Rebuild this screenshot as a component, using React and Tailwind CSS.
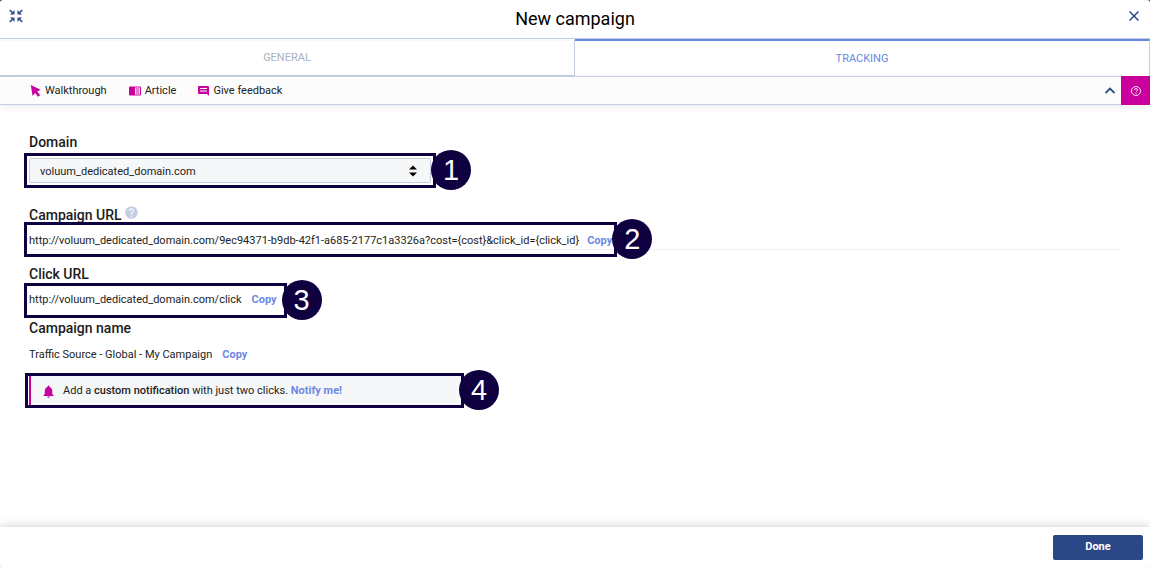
import React from "react";
import { MdHelp, MdNotifications } from "react-icons/md";

function Callout({ number, inset = "-inset-[5px]", className = "", children }) {
  return (
    <div className={`relative ${className}`}>
      {children}
      <div className={`pointer-events-none absolute border-3 border-[#0f0140] ${inset}`}>
        <span className="absolute -top-[6px] -right-[38px] flex size-10 items-center justify-center rounded-full bg-[#0f0140] font-['Liberation_Sans',sans-serif] text-[29px] leading-10 text-white">
          {number}
        </span>
      </div>
    </div>
  );
}

function Heading({ children }) {
  return <h2 className="text-sm leading-5 font-medium text-[#1c1c1c]">{children}</h2>;
}

function Copy() {
  return (
    <button type="button" className="font-bold text-[#6c8ae4]">
      Copy
    </button>
  );
}

function CollapseIcon() {
  return (
    <svg viewBox="0 0 14 14" className="size-[14px]" fill="#2c4786" stroke="#2c4786">
      <path strokeWidth="1.7" d="M.8 1l3 3M13.200 1l-3 3M.8 13l3-3M13.200 13l-3-3" />
      <path stroke="none" d="M5.500 1v4.500H1l1.500-1.300L4.200 2.500zM8.500 1v4.500H13l-1.500-1.300L9.800 2.500zM5.500 13V8.500H1l1.500 1.300 1.700 1.700zM8.500 13V8.500H13l-1.500 1.300-1.700 1.700z" />
    </svg>
  );
}

function ArticleIcon() {
  return (
    <svg viewBox="0 0 12 10" className="h-[10px] w-3" fill="#ca009e">
      <path fillRule="evenodd" d="M1 .5h10a1 1 0 011 1v7a1 1 0 01-1 1H1a1 1 0 01-1-1v-7a1 1 0 011-1zM6 1.500v7h5v-7z" />
      <path d="M6.800 2.500h3.500v1H6.800zM6.800 4.500h3.500v1H6.800zM6.800 6.500h3.500v1H6.800z" />
    </svg>
  );
}

function FeedbackIcon() {
  return (
    <svg viewBox="0 0 11 11" className="size-[11px]" fill="#ca009e">
      <path fillRule="evenodd" d="M1 1h9a1 1 0 011 1v9L9 9H1a1 1 0 01-1-1V2a1 1 0 011-1zM2 3v1h7V3zM2 5.500v1h7v-1z" />
    </svg>
  );
}

export default function App() {
  return (
    <div className="min-h-screen bg-linear-to-b from-[#444] from-50% to-[#e4e4e4] to-50% font-[Roboto,sans-serif] text-[11px] leading-4 text-[#222]">
      <div className="flex min-h-screen flex-col rounded-[3px] bg-white">
        <header className="relative flex h-[39px] items-center justify-center border-b border-[#c3cfe0]">
          <button type="button" aria-label="Collapse" className="absolute top-[9px] left-[9px]">
            <CollapseIcon />
          </button>
          <h1 className="text-lg leading-6 text-black">New campaign</h1>
          <button type="button" aria-label="Close" className="absolute top-[11px] right-[11px]">
            <svg viewBox="0 0 10 10" className="size-[10px]" stroke="#2c4786" strokeWidth="1.5">
              <path d="M.5.5l9 9M9.5.5l-9 9" />
            </svg>
          </button>
        </header>

        <nav className="grid h-[37px] grid-cols-2">
          <button type="button" className="border-t-2 border-r border-b border-[#c3cfe0] border-t-[#f8f9fb] text-[#a9b1c6]">
            GENERAL
          </button>
          <button type="button" className="border-t-2 border-r border-t-[#6688e0] border-r-[#c3cfe0] text-[#6688e0]">
            TRACKING
          </button>
        </nav>

        <div className="flex h-[29px] items-stretch bg-[#fcfcfc] shadow-[0_2px_8px_rgba(0,0,0,0.08)]">
          <div className="flex grow items-center border-y border-[#c3cfe0] pl-[30px]">
            <a href="#walkthrough" className="flex items-center gap-1">
              <svg viewBox="0 0 11 12" className="h-3 w-[11px]" fill="#ca009e">
                <path d="M.8 0l9.800 4.800-3.300 1.700 2.900 3.700-2.200 1.600-2.800-3.700L2.600 11z" />
              </svg>
              Walkthrough
            </a>
            <a href="#article" className="ml-[22px] flex items-center gap-1">
              <ArticleIcon />
              Article
            </a>
            <a href="#feedback" className="ml-[22px] flex items-center gap-1">
              <FeedbackIcon />
              Give feedback
            </a>
            <button type="button" aria-label="Hide" className="mr-[6px] ml-auto">
              <svg viewBox="0 0 10 8" className="h-2 w-[10px]" fill="none" stroke="#2c4786" strokeWidth="1.8">
                <path d="M.5 6L5 1.500 9.500 6" />
              </svg>
            </button>
          </div>
          <button type="button" aria-label="Help" className="flex w-[29px] items-center justify-center bg-[#ca009e] text-white">
            <svg viewBox="0 0 10 10" className="size-[10px]" fill="none" stroke="#fff" strokeWidth="0.9">
              <circle cx="5" cy="5" r="4.500" />
              <path d="M3.500 4a1.500 1.500 0 113 0c0 1-1.500 1-1.500 2.200M5 7v1" />
            </svg>
          </button>
        </div>

        <main className="grow px-[29px] pt-[27px]">
          <label htmlFor="domain">
            <Heading>Domain</Heading>
          </label>
          <Callout number={1} className="mt-[6px] h-[25px] w-full max-w-[402px]">
            <select
              id="domain"
              className="block h-full w-full appearance-none rounded-[2px] border border-[#c3cfe0] bg-[#f5f7f9] px-[10px] pt-[2px] text-[11px] leading-4"
            >
              <option>voluum_dedicated_domain.com</option>
            </select>
            <svg viewBox="0 0 8 12" className="pointer-events-none absolute top-[7px] right-[14px] h-3 w-2" fill="#000">
              <path d="M4 0.500l4 4H0zM4 11.500l4-4H0z" />
            </svg>
          </Callout>

          <div className="mt-[22px] flex items-start gap-[2px]">
            <Heading>Campaign URL</Heading>
            <MdHelp className="size-[15px] text-[#c3cfe0]" />
          </div>
          <div className="mt-[2px] h-[23px] border-b border-[#eef0f4]">
            <Callout number={2} className="flex h-[25px] w-fit items-center gap-2 pt-[2px]">
              <span>{"http://voluum_dedicated_domain.com/9ec94371-b9db-42f1-a685-2177c1a3326a?cost={cost}&click_id={click_id}"}</span>
              <Copy />
            </Callout>
          </div>

          <div className="mt-[14px]">
            <Heading>Click URL</Heading>
          </div>
          <Callout number={3} className="mt-1 flex h-[25px] w-fit items-center gap-[10px] pr-[5px] pb-[2px]">
            <span>http://voluum_dedicated_domain.com/click</span>
            <Copy />
          </Callout>

          <div className="mt-[5px]">
            <Heading>Campaign name</Heading>
          </div>
          <div className="mt-[9px] flex gap-[10px]">
            <span>Traffic Source - Global - My Campaign</span>
            <Copy />
          </div>

          <Callout
            number={4}
            inset="-top-[3px] -right-[3px] -bottom-[3px] -left-[6px]"
            className="mt-[13px] flex h-[29px] w-full max-w-[432px] items-center border-l-2 border-[#ca009e] bg-[#f5f7f9] pt-px pl-[10px]"
          >
            <MdNotifications className="mr-[7px] size-[15px] text-[#ca009e]" />
            <p>
              Add a <strong className="font-medium">custom notification</strong> with just two clicks.{" "}
              <a href="#notify" className="font-bold text-[#6c8ae4]">
                Notify me!
              </a>
            </p>
          </Callout>
        </main>

        <footer className="flex h-10 items-center justify-end px-[7px] shadow-[0_-2px_8px_rgba(0,0,0,0.15)]">
          <button type="button" className="h-[25px] w-[90px] rounded-[2px] bg-[#2c4786] font-bold text-white">
            Done
          </button>
        </footer>
      </div>
    </div>
  );
}
